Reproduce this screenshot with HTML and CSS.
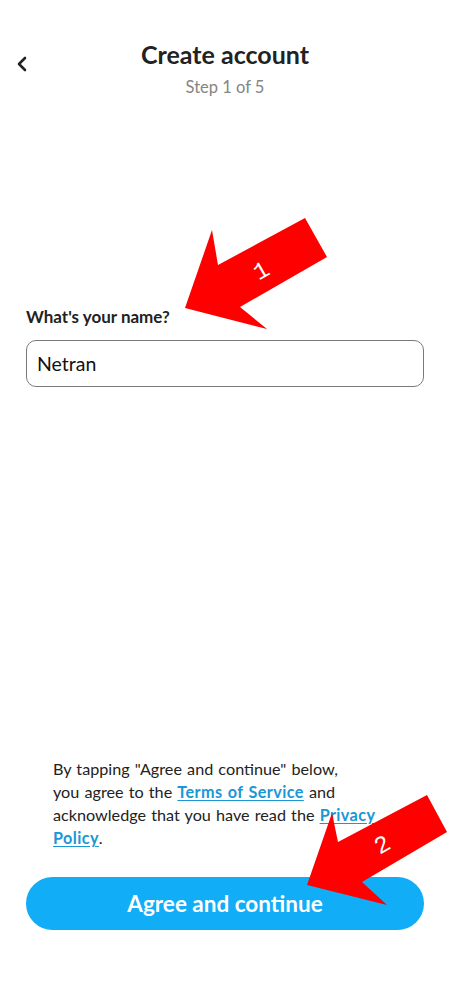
FILE: index.html
```html
<!DOCTYPE html>
<html lang="en">
<head>
    <meta charset="UTF-8">
    <meta name="viewport" content="width=device-width, initial-scale=1.0">
    <title>Create account</title>
    <link rel="stylesheet" href="styles.css">
</head>
<body>

<div class="screen">
    <div class="header">
        <button class="back" aria-label="Back">
            <svg width="14" height="16" viewBox="0 0 14 16">
                <path d="M10 2 L4 8 L10 14" fill="none" stroke="#222" stroke-width="2.6" stroke-linecap="round" stroke-linejoin="round"/>
            </svg>
        </button>
        <h1>Create account</h1>
        <p class="step">Step 1 of 5</p>
    </div>

    <div class="form-group">
        <label for="name">What's your name?</label>
        <input type="text" id="name" value="Netran">
    </div>

    <div class="footer">
        <p class="terms">
            By tapping "Agree and continue" below,<br>
            you agree to the <a href="#">Terms of Service</a> and<br>
            acknowledge that you have read the <a href="#">Privacy</a><br>
            <a href="#">Policy</a>.
        </p>
        <button class="primary">Agree and continue</button>
    </div>

    <!-- annotation arrows drawn over the screen -->
    <svg class="marks" width="450" height="1000" viewBox="0 0 450 1000">
        <polygon points="185,308 212,230 218,265 305,218 327,257 240,307 267,329" fill="#ff0000"/>
        <text x="262" y="278" transform="rotate(-30 262 272)" class="mark-num">1</text>
        <polygon points="307,885 332,813 338,842 427,795 447,832 362,882 387,905" fill="#ff0000"/>
        <text x="383" y="852" transform="rotate(-30 383 846)" class="mark-num">2</text>
    </svg>
</div>

</body>
</html>
```

FILE: styles.css
```css
body {
    font-family: Lato, "Open Sans", sans-serif;
    background-color: #ffffff;
    color: #222;
    margin: 0;
}

.screen {
    position: relative;
    width: 450px;
    height: 1000px;
    display: flex;
    flex-direction: column;
    overflow: hidden;
}

.header {
    display: grid;
    grid-template-columns: 40px 1fr 40px;
    padding-top: 39px;
}

.back {
    grid-column: 1;
    grid-row: 1 / 3;
    align-self: center;
    margin: -6px 0 0 14px;
    padding: 0;
    border: none;
    background: none;
    width: 16px;
    height: 20px;
}

h1 {
    grid-column: 2;
    grid-row: 1;
    margin: 0;
    text-align: center;
    font-size: 25px;
    line-height: 31px;
    font-weight: 700;
    color: #222;
}

.step {
    grid-column: 2;
    grid-row: 2;
    margin: 7px 0 0;
    text-align: center;
    font-size: 16.5px;
    line-height: 20px;
    color: #858585;
}

.form-group {
    margin-top: 210px;
    padding: 0 26px;
}

.form-group label {
    display: block;
    font-size: 17px;
    line-height: 20px;
    font-weight: 700;
    color: #222;
    margin-bottom: 13px;
}

.form-group input {
    box-sizing: border-box;
    width: 398px;
    height: 47px;
    padding: 0 10px;
    border: 1.5px solid #7a7a7a;
    border-radius: 10px;
    font-family: inherit;
    font-size: 19.5px;
    color: #111;
    outline: none;
}

.footer {
    margin-top: auto;
    padding-bottom: 70px;
}

.terms {
    margin: 0 0 28px;
    padding: 0 30px 0 53px;
    font-size: 16.2px;
    line-height: 23px;
    color: #222;
    word-spacing: 1px;
}

.terms a {
    color: #1a97d5;
    font-weight: 700;
    text-decoration: underline;
    text-underline-offset: 2px;
    letter-spacing: 0.4px;
}

.primary {
    display: block;
    box-sizing: border-box;
    width: 398px;
    height: 53px;
    margin: 0 0 0 26px;
    border: none;
    border-radius: 27px;
    background-color: #12adf7;
    color: #fff;
    font-family: inherit;
    font-size: 22.5px;
    font-weight: 700;
}

.marks {
    position: absolute;
    top: 0;
    left: 0;
    pointer-events: none;
}

.mark-num {
    fill: #ffffff;
    font-family: "Liberation Mono", monospace;
    font-size: 24px;
    text-anchor: middle;
}
```
